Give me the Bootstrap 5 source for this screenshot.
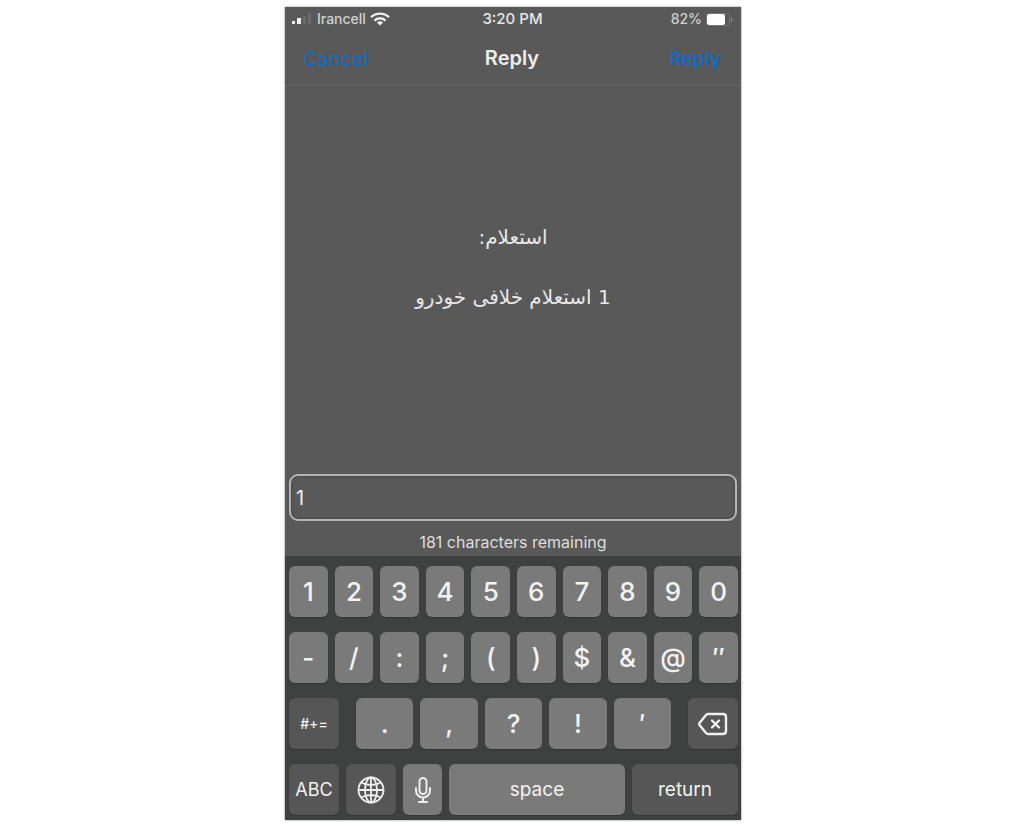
<!DOCTYPE html>
<html lang="en">
<head>
<meta charset="utf-8">
<meta name="viewport" content="width=device-width, initial-scale=1">
<title>Reply</title>
<link href="https://cdn.jsdelivr.net/npm/bootstrap@5.3.0/dist/css/bootstrap.min.css" rel="stylesheet">
<style>
body{background:#fff;font-family:Inter,"DejaVu Sans",sans-serif;padding:7px 0 9px 2px}
.phone{max-width:456px;background:#595959;color:#eee;min-height:calc(100vh - 16px);box-shadow:0 0 2px #777}
.status{font-size:14px;line-height:24px;padding:0 8px 0 7px;font-weight:500;color:#d0d0d0}
.status .clock{font-size:15px;font-weight:500;color:#e6e6e6}
.titlebar{height:55px;padding:0 20px 0 18px;border-bottom:1px solid #646464}
.titlebar h1{font-size:20px;line-height:24px;font-weight:600}
.titlebar .btn{font-size:20px;line-height:24px;color:#176bc0;border:0}
.titlebar .btn-send{font-size:19px;font-weight:600}
.message{font-family:"DejaVu Sans",sans-serif;font-size:20px;line-height:30px;padding-bottom:26px;color:#e8e8e8}
.message p{margin-bottom:30px}
.message p:last-child{margin-bottom:0}
.compose{padding:0 4px}
.compose .form-control{height:47px;background:#595959;border:2px solid #b4b4b4;border-radius:9px;color:#eee;font-size:20px;padding:0 5px;box-shadow:inset 0 0 2px 1px #4a4a4a}
.remaining{font-size:16px;line-height:20px;padding:11px 0 4px;color:#dedede}
.keyboard{background:#3f4040;padding:10px 3px 5px 4px;display:flex;flex-direction:column;gap:15px}
.keys{display:flex;gap:7px}
.key{flex:1 1 0;min-width:0;height:51px;padding:0;border:0;border-radius:6px;background:#7a7a7a;color:#f2f2f2;font-size:26px;line-height:50px;font-weight:500;display:flex;align-items:center;justify-content:center;box-shadow:0 1px 1px #333}
.key:hover{background:#888;color:#fff}
.key-dark{background:#565656}
.key-word{font-size:19px;font-weight:400}
.key-abc{font-size:18px;font-weight:400}
.key-symbols{font-size:14px;font-weight:500}
.key-side{flex:0 0 50px}
.key-mic{flex:0 0 39px}
.key-space{flex:0 0 176px}
.keys-middle{margin:0 10px}
</style>
</head>
<body>
<main class="phone mx-auto d-flex flex-column">
  <header>
    <div class="status row g-0 align-items-center">
      <div class="col d-flex align-items-center gap-1">
        <svg width="21" height="12" viewBox="0 0 21 12" aria-label="Signal"><rect y="8" width="3" height="3" fill="#eee"/><rect x="5" y="5" width="4" height="6" fill="#eee"/><rect x="11" y="3" width="3" height="8" fill="#6a6a6a"/><rect x="16" y="0" width="3" height="11" fill="#6a6a6a"/></svg>
        <span>Irancell</span>
        <svg width="20" height="14" viewBox="0 0 20 14" fill="none" stroke="#f0f0f0" stroke-width="2.4" aria-label="Wi-Fi"><path d="M1 5.2a13 13 0 0 1 18 0M4.400 8.600a8 8 0 0 1 11.200 0"/><path d="M10 13.600 6.900 10.600a4.500 4.500 0 0 1 6.200 0z" fill="#f0f0f0" stroke="none"/></svg>
      </div>
      <div class="col-auto clock">3:20 PM</div>
      <div class="col d-flex align-items-center justify-content-end gap-1">
        <span>82%</span>
        <svg width="27" height="13" viewBox="0 0 27 13" aria-label="Battery"><rect x=".5" y=".5" width="23" height="12" rx="3" fill="none" stroke="#777"/><rect x="1" y="1" width="18" height="11" rx="2" fill="#fff"/><path d="M25 4c2 1 2 4 0 5z" fill="#888"/></svg>
      </div>
    </div>
    <div class="titlebar row g-0 align-items-center">
      <div class="col"><button type="button" class="btn p-0">Cancel</button></div>
      <h1 class="col-auto mb-0">Reply</h1>
      <div class="col text-end"><button type="button" class="btn btn-send p-0">Reply</button></div>
    </div>
  </header>

  <section class="message flex-grow-1 d-flex flex-column justify-content-center text-center" dir="rtl" lang="fa">
    <p>استعلام:</p>
    <p>1 استعلام خلافی خودرو</p>
  </section>

  <div class="compose">
    <input type="text" class="form-control" value="1" aria-label="Reply text" aria-describedby="remaining">
    <div id="remaining" class="remaining text-center">181 characters remaining</div>
  </div>

  <div class="keyboard">
    <div class="keys">
      <button type="button" class="btn key">1</button><button type="button" class="btn key">2</button><button type="button" class="btn key">3</button><button type="button" class="btn key">4</button><button type="button" class="btn key">5</button><button type="button" class="btn key">6</button><button type="button" class="btn key">7</button><button type="button" class="btn key">8</button><button type="button" class="btn key">9</button><button type="button" class="btn key">0</button>
    </div>
    <div class="keys">
      <button type="button" class="btn key">-</button><button type="button" class="btn key">/</button><button type="button" class="btn key">:</button><button type="button" class="btn key">;</button><button type="button" class="btn key">(</button><button type="button" class="btn key">)</button><button type="button" class="btn key">$</button><button type="button" class="btn key">&amp;</button><button type="button" class="btn key">@</button><button type="button" class="btn key">″</button>
    </div>
    <div class="keys">
      <button type="button" class="btn key key-dark key-side key-symbols">#+=</button>
      <div class="keys keys-middle flex-grow-1">
        <button type="button" class="btn key">.</button><button type="button" class="btn key">,</button><button type="button" class="btn key">?</button><button type="button" class="btn key">!</button><button type="button" class="btn key">′</button>
      </div>
      <button type="button" class="btn key key-dark key-side" aria-label="Delete"><svg width="30" height="24" viewBox="0 0 30 24" fill="none" stroke="#f0f0f0" stroke-width="2.400" stroke-linejoin="round" stroke-linecap="round"><path d="M10 2H25Q28 2 28 5V19Q28 22 25 22H10Q9 22 8 21L1.500 13Q.800 12 1.500 11L8 3Q9 2 10 2Z"/><path d="m14 8.500 7 7m0-7-7 7"/></svg></button>
    </div>
    <div class="keys">
      <button type="button" class="btn key key-dark key-side key-abc">ABC</button>
      <button type="button" class="btn key key-dark key-side" aria-label="Language"><svg width="28" height="28" viewBox="0 0 28 28" fill="none" stroke="#eee" stroke-width="1.800"><circle cx="14" cy="14" r="12.500"/><ellipse cx="14" cy="14" rx="6" ry="12.500"/><path d="M14 1.500v25M1.500 14h25M4 6.500q10 5 20 0M4 21.500q10-5 20 0"/></svg></button>
      <button type="button" class="btn key key-mic" aria-label="Dictate"><svg width="18" height="28" viewBox="0 0 18 28" fill="none" stroke="#eee" stroke-width="2" stroke-linecap="round"><rect x="5.500" y="2" width="7" height="16" rx="3.500"/><path d="M2 12v2.500a7 7 0 0 0 14 0V12M9 21.500V26M5 26h8"/></svg></button>
      <button type="button" class="btn key key-space key-word">space</button>
      <button type="button" class="btn key key-dark key-word">return</button>
    </div>
  </div>
</main>
<script src="https://cdn.jsdelivr.net/npm/bootstrap@5.3.0/dist/js/bootstrap.bundle.min.js"></script>
</body>
</html>
